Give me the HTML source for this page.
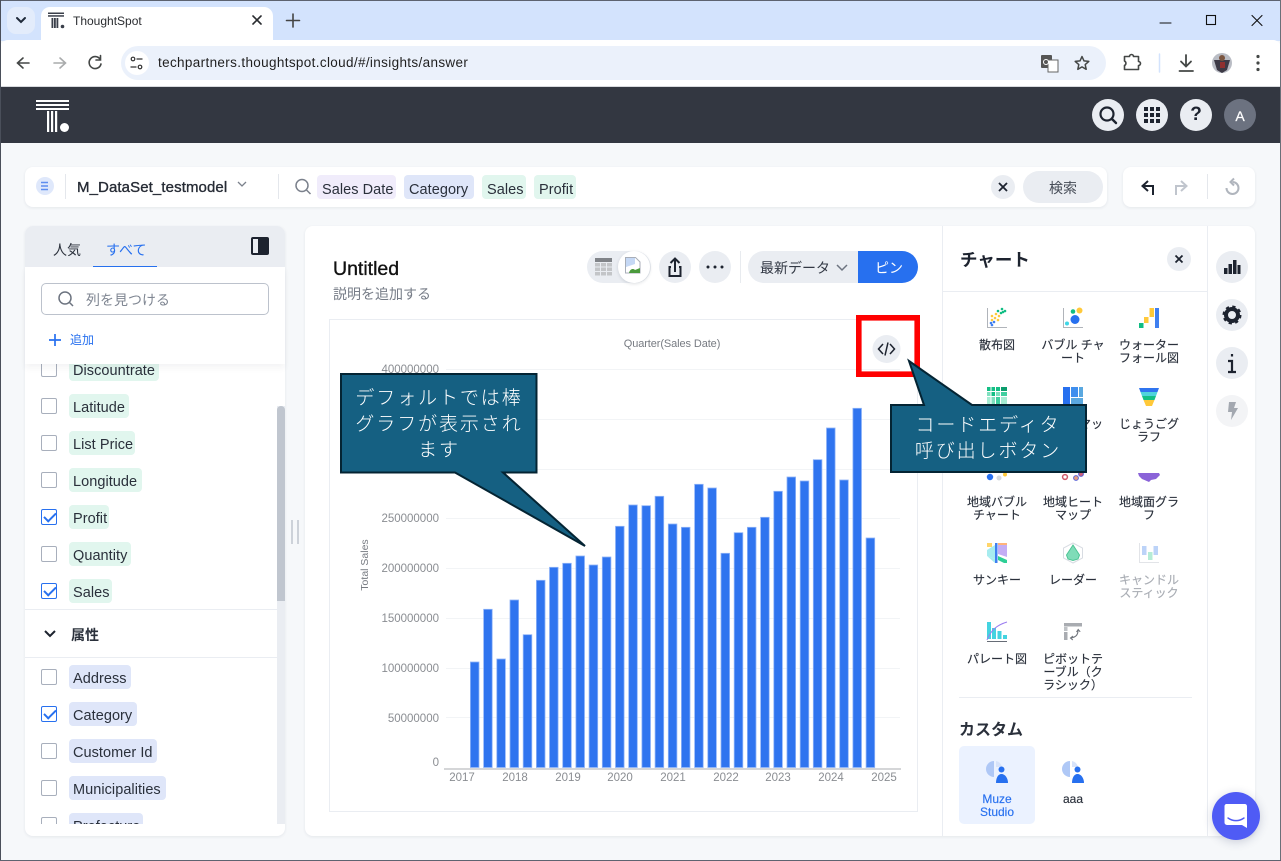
<!DOCTYPE html>
<html lang="ja"><head><meta charset="utf-8"><title>ThoughtSpot</title>
<style>
*{box-sizing:border-box}
html,body{margin:0;padding:0;width:1281px;height:861px;overflow:hidden;background:#f6f8fa;font-family:"Liberation Sans","Noto Sans CJK JP",sans-serif;color:#1d232f}
.a{position:absolute}
.t{position:absolute;white-space:nowrap}
.chip{position:absolute;height:24px;line-height:28px;border-radius:4px;font-size:14.5px;letter-spacing:.05px;padding-left:4px;color:#2a303b;white-space:nowrap;overflow:hidden}
.top{line-height:30px}
.g{background:#e1f6ee}.b{background:#dfe6f9}.p{background:#f0ecfb}
.cb{position:absolute;left:41px;width:16px;height:16px;border:1px solid #a8afbc;border-radius:2px;background:#fff}
.cb.on{border-color:#2770ef}
.cb.on:after{content:"";position:absolute;left:2px;top:1px;width:10px;height:5px;border-left:2px solid #2770ef;border-bottom:2px solid #2770ef;transform:rotate(-45deg) translate(-1px,1px)}
.lab{position:absolute;width:80px;text-align:center;font-size:12px;line-height:13px;color:#2a303b;-webkit-text-stroke:.15px currentColor}
.yl{position:absolute;left:350px;width:89px;text-align:right;font-size:11.5px;line-height:14px;color:#8a8d92}
.xl{position:absolute;width:40px;text-align:center;font-size:11.5px;line-height:14px;color:#8a8d92}
.circ{position:absolute;border-radius:50%;background:#eaedf2}
.call{position:absolute;z-index:6;color:#fff;font-size:19px;line-height:26px;text-align:center;font-weight:300;letter-spacing:1.9px;font-family:"Noto Sans CJK JP",sans-serif}
</style></head><body>

<!-- window chrome -->
<div class="a" style="left:0;top:0;width:1281px;height:41px;background:#d3e3fd;border-top:1px solid #5d6370"></div>
<div class="a" style="left:0;top:40px;width:1281px;height:47px;background:#fff;border-radius:8px 8px 0 0;border-bottom:1px solid #d8dade"></div>
<div class="a" style="left:41px;top:7px;width:232px;height:34px;background:#fff;border-radius:9px 9px 0 0"></div>
<div class="a" style="left:7px;top:7px;width:28px;height:27px;background:#e3ecfb;border-radius:9px"></div>
<div class="t" style="left:73px;top:13px;font-size:12px;line-height:16px;color:#2a2c30">ThoughtSpot</div>
<div class="a" style="left:121px;top:46px;width:985px;height:34px;background:#ebf1fb;border-radius:17px"></div>
<div class="a" style="left:125px;top:51px;width:24px;height:24px;background:#fff;border-radius:50%"></div>
<div class="t" style="left:158px;top:55px;font-size:13.5px;line-height:16px;color:#1f1f1f;letter-spacing:.35px">techpartners.thoughtspot.cloud/#/insights/answer</div>

<!-- app header -->
<div class="a" style="left:0;top:87px;width:1281px;height:56px;background:#333741"></div>
<div class="circ" style="left:1092px;top:99px;width:32px;height:32px"></div>
<div class="circ" style="left:1136px;top:99px;width:32px;height:32px"></div>
<div class="circ" style="left:1180px;top:99px;width:32px;height:32px"></div>
<div class="circ" style="left:1224px;top:99px;width:32px;height:32px;background:#6c7280"></div>
<div class="t" style="left:1180px;top:103px;width:32px;text-align:center;font-size:19px;font-weight:700;line-height:24px;color:#1d232f">?</div>
<div class="t" style="left:1224px;top:107px;width:32px;text-align:center;font-size:14px;line-height:18px;color:#fff;-webkit-text-stroke:.25px #fff">A</div>

<!-- search bar -->
<div class="a" style="left:25px;top:167px;width:1082px;height:40px;background:#fff;border-radius:8px;box-shadow:0 1px 3px rgba(30,40,60,.08)"></div>
<div class="a" style="left:1123px;top:167px;width:132px;height:40px;background:#fff;border-radius:8px;box-shadow:0 1px 3px rgba(30,40,60,.08)"></div>
<div class="a" style="left:65px;top:174px;width:1px;height:25px;background:#e4e7ec"></div>
<div class="a" style="left:278px;top:174px;width:1px;height:25px;background:#e4e7ec"></div>
<div class="t" style="left:77px;top:178px;font-size:15px;line-height:19px;color:#262b35;-webkit-text-stroke:.35px #262b35;letter-spacing:.1px">M_DataSet_testmodel</div>
<div class="chip p top" style="left:317px;top:175px;width:79px;padding-left:5px">Sales Date</div>
<div class="chip b top" style="left:404px;top:175px;width:70px;padding-left:5px">Category</div>
<div class="chip g top" style="left:482px;top:175px;width:44px;padding-left:5px">Sales</div>
<div class="chip g top" style="left:534px;top:175px;width:42px;padding-left:5px">Profit</div>
<div class="circ" style="left:991px;top:175px;width:24px;height:24px"></div>
<div class="a" style="left:1023px;top:171px;width:80px;height:32px;border-radius:16px;background:#eaedf2"></div>
<div class="t" style="left:1023px;top:179px;width:80px;text-align:center;font-size:14px;line-height:18px;color:#444a55">検索</div>
<div class="a" style="left:1207px;top:174px;width:1px;height:25px;background:#e4e7ec"></div>

<!-- left panel -->
<div class="a" style="left:25px;top:226px;width:260px;height:610px;background:#fff;border-radius:8px;box-shadow:0 1px 3px rgba(30,40,60,.08);overflow:hidden">
  <div class="a" style="left:0;top:0;width:260px;height:41px;background:#eaedf2"></div>
  <div class="a" style="left:68px;top:40px;width:64px;height:2px;background:#2770ef"></div>
  <div class="a" style="left:252px;top:180px;width:8px;height:418px;background:#eaedf2"></div>
  <div class="a" style="left:252px;top:180px;width:8px;height:195px;background:#c0c6cf;border-radius:4px 4px 0 0"></div>
</div>
<div class="t" style="left:53px;top:241px;font-size:14px;line-height:18px;color:#2a303b">人気</div>
<div class="t" style="left:106px;top:241px;font-size:14px;line-height:18px;color:#2770ef">すべて</div>

<div class="a" style="left:25px;top:364px;width:252px;height:460px;overflow:hidden">
  <div class="cb" style="left:16px;top:-3px"></div><div class="chip g" style="left:44px;top:-7px;width:90px">Discountrate</div>
  <div class="cb" style="left:16px;top:34px"></div><div class="chip g" style="left:44px;top:30px;width:60px">Latitude</div>
  <div class="cb" style="left:16px;top:71px"></div><div class="chip g" style="left:44px;top:67px;width:66px">List Price</div>
  <div class="cb" style="left:16px;top:108px"></div><div class="chip g" style="left:44px;top:104px;width:73px">Longitude</div>
  <div class="cb on" style="left:16px;top:145px"></div><div class="chip g" style="left:44px;top:141px;width:40px">Profit</div>
  <div class="cb" style="left:16px;top:182px"></div><div class="chip g" style="left:44px;top:178px;width:62px">Quantity</div>
  <div class="cb on" style="left:16px;top:219px"></div><div class="chip g" style="left:44px;top:215px;width:43px">Sales</div>
  <div class="a" style="left:0;top:245px;width:252px;height:1px;background:#eaedf2"></div>
  <div class="a" style="left:0;top:293px;width:252px;height:1px;background:#eaedf2"></div>
  <div class="t" style="left:46px;top:262px;font-size:14px;font-weight:700;line-height:18px;color:#2a303b">属性</div>
  <div class="cb" style="left:16px;top:305px"></div><div class="chip b" style="left:44px;top:301px;width:62px">Address</div>
  <div class="cb on" style="left:16px;top:342px"></div><div class="chip b" style="left:44px;top:338px;width:68px">Category</div>
  <div class="cb" style="left:16px;top:379px"></div><div class="chip b" style="left:44px;top:375px;width:88px">Customer Id</div>
  <div class="cb" style="left:16px;top:416px"></div><div class="chip b" style="left:44px;top:412px;width:97px">Municipalities</div>
  <div class="cb" style="left:16px;top:453px"></div><div class="chip b" style="left:44px;top:449px;width:74px">Prefecture</div>
</div>
<!-- panel search overlay -->
<div class="a" style="left:25px;top:267px;width:260px;height:97px;background:#fff;box-shadow:0 4px 6px rgba(30,40,60,.05)"></div>
<div class="a" style="left:41px;top:283px;width:228px;height:32px;border:1px solid #bcc2cc;border-radius:5px;background:#fff"></div>
<div class="t" style="left:86px;top:292px;font-size:14px;line-height:17px;color:#7f8692">列を見つける</div>
<div class="t" style="left:70px;top:332px;font-size:12px;line-height:17px;color:#2770ef">追加</div>

<!-- resize handle -->
<div class="a" style="left:291px;top:520px;width:2px;height:24px;background:#cdd2d9"></div>
<div class="a" style="left:297px;top:520px;width:2px;height:24px;background:#cdd2d9"></div>

<!-- main panel -->
<div class="a" style="left:305px;top:226px;width:950px;height:610px;background:#fff;border-radius:8px;box-shadow:0 1px 3px rgba(30,40,60,.08)"></div>
<div class="a" style="left:942px;top:226px;width:1px;height:610px;background:#eaedf2"></div>
<div class="a" style="left:1207px;top:226px;width:1px;height:610px;background:#eaedf2"></div>
<div class="a" style="left:943px;top:291px;width:264px;height:1px;background:#eaedf2"></div>
<div class="t" style="left:333px;top:258px;font-size:19.500px;line-height:22px;font-weight:400;color:#111;-webkit-text-stroke:.35px #111">Untitled</div>
<div class="t" style="left:333px;top:285px;font-size:14px;line-height:18px;color:#767c87">説明を追加する</div>

<!-- action row -->
<div class="a" style="left:587px;top:251px;width:64px;height:32px;border-radius:16px;background:#eaedf2"></div>
<div class="circ" style="left:618px;top:251px;width:32px;height:32px;background:#fff;box-shadow:0 1px 3px rgba(30,40,60,.15)"></div>
<div class="circ" style="left:659px;top:251px;width:32px;height:32px"></div>
<div class="circ" style="left:699px;top:251px;width:32px;height:32px"></div>
<div class="a" style="left:740px;top:251px;width:1px;height:32px;background:#e8ebef"></div>
<div class="a" style="left:748px;top:251px;width:112px;height:32px;border-radius:16px 0 0 16px;background:#eaedf2"></div>
<div class="a" style="left:858px;top:251px;width:60px;height:32px;border-radius:0 16px 16px 0;background:#2770ef"></div>
<div class="t" style="left:760px;top:259px;font-size:14px;line-height:18px;color:#333945">最新データ</div>
<div class="t" style="left:875px;top:259px;font-size:14px;line-height:18px;color:#fff">ピン</div>

<!-- chart frame -->
<div class="a" style="left:329px;top:319px;width:589px;height:493px;border:1px solid #eaedf2"></div>
<div class="t" style="left:572px;top:337px;width:200px;text-align:center;font-size:11px;line-height:14px;color:#777b82;letter-spacing:-.1px">Quarter(Sales Date)</div>
<div class="yl" style="top:363px">400000000</div>
<div class="yl" style="top:512px">250000000</div>
<div class="yl" style="top:562px">200000000</div>
<div class="yl" style="top:612px">150000000</div>
<div class="yl" style="top:662px">100000000</div>
<div class="yl" style="top:712px">50000000</div>
<div class="yl" style="top:756px">0</div>
<div class="xl" style="left:442px;top:771px">2017</div>
<div class="xl" style="left:495px;top:771px">2018</div>
<div class="xl" style="left:548px;top:771px">2019</div>
<div class="xl" style="left:600px;top:771px">2020</div>
<div class="xl" style="left:653px;top:771px">2021</div>
<div class="xl" style="left:706px;top:771px">2022</div>
<div class="xl" style="left:758px;top:771px">2023</div>
<div class="xl" style="left:811px;top:771px">2024</div>
<div class="xl" style="left:864px;top:771px">2025</div>
<div class="t" style="left:325px;top:558px;width:80px;text-align:center;font-size:10.5px;line-height:14px;color:#777b82;transform:rotate(-90deg)">Total Sales</div>

<svg class="a" style="left:0;top:0;z-index:2;pointer-events:none" width="1281" height="861" viewBox="0 0 1281 861">
  <!-- favicon -->
  <g fill="#3a3f4a"><rect x="48" y="12.500" width="16" height="1.500"/><rect x="48" y="15.200" width="16" height="1.500"/><rect x="51.500" y="18" width="1.800" height="10"/><rect x="54" y="18" width="1.800" height="10"/><rect x="56.500" y="18" width="1.800" height="10"/><circle cx="62.500" cy="26.500" r="1.800"/></g>
  <g fill="none" stroke-linecap="round">
    <path d="M17 18l4 4 4-4" stroke="#1f2a3a" stroke-width="2"/>
    <path d="M253 16l8 8M261 16l-8 8" stroke="#2a2c30" stroke-width="1.6"/>
    <path d="M293 14v13M286.500 20.500h13" stroke="#444" stroke-width="1.6"/>
    <path d="M1160 23h11" stroke="#111" stroke-width="1.1"/>
    <rect x="1206.500" y="15.500" width="9" height="9" stroke="#111" stroke-width="1.1"/>
    <path d="M1252 15.500l10 10M1262 15.500l-10 10" stroke="#111" stroke-width="1.1"/>
    <path d="M29 63H18M23 58l-5.500 5 5.500 5" stroke="#444746" stroke-width="1.600"/>
    <path d="M54 63h11M60 58l5.500 5-5.500 5" stroke="#a9abac" stroke-width="1.600"/>
    <path d="M100 59a6 6 0 1 0 1 5M100.500 55.500v4.500h-4.500" stroke="#444746" stroke-width="1.600"/>
    <circle cx="133" cy="59" r="1.800" stroke="#333" stroke-width="1.200"/><path d="M137 59h5M131 67h5" stroke="#333" stroke-width="1.300"/><circle cx="140" cy="67" r="1.800" stroke="#333" stroke-width="1.200"/>
    <path d="M1082 56.500l2 4.400 4.800.5-3.600 3.200 1 4.700-4.200-2.400-4.200 2.400 1-4.700-3.600-3.200 4.800-.5z" stroke="#444746" stroke-width="1.500" stroke-linejoin="round"/>
    <path d="M1125 57h5a2 2 0 0 1 4 0h5v5a2 2 0 0 1 0 4v4h-14v-4a2.500 2.500 0 0 0 0-4.500z" stroke="#444746" stroke-width="1.600" stroke-linejoin="round" transform="translate(-.5,-.5)"/>
    <path d="M1159.500 54v18" stroke="#d3e3fd" stroke-width="1.500"/>
    <path d="M1186 55v11M1181 61.500l5 5 5-5M1179.500 71h13.500" stroke="#444746" stroke-width="1.800"/>
  </g>
  <rect x="1041" y="55" width="11" height="13" rx="1" fill="#555"/><rect x="1048" y="60" width="10" height="12" fill="#fff" stroke="#666"/><circle cx="1046" cy="62" r="2.500" fill="none" stroke="#fff"/>
  <circle cx="1222" cy="63" r="10" fill="#b9bcc4"/><path d="M1214 60h16l-3 10-5 3-5-3z" fill="#3d3a46"/><circle cx="1222" cy="58" r="3" fill="#7a5540"/><rect x="1220" y="62" width="5" height="6" fill="#8f3030"/>
  <circle cx="1258" cy="56.500" r="1.600" fill="#444746"/><circle cx="1258" cy="63" r="1.600" fill="#444746"/><circle cx="1258" cy="69.500" r="1.600" fill="#444746"/>

  <!-- logo -->
  <g fill="#fff"><rect x="36" y="100" width="33" height="2"/><rect x="36" y="104" width="33" height="2"/><rect x="36" y="108" width="33" height="2"/><rect x="47" y="111" width="2.200" height="21"/><rect x="51" y="111" width="2.200" height="21"/><rect x="55" y="111" width="2.200" height="21"/><circle cx="64.500" cy="127.500" r="4.500"/></g>
  <!-- header icons -->
  <circle cx="1107" cy="114" r="6.500" fill="none" stroke="#1d232f" stroke-width="2.200"/><path d="M1112 119l4 4" stroke="#1d232f" stroke-width="2.400" stroke-linecap="round"/>
  <g fill="#1d232f"><rect x="1144" y="107" width="4" height="4"/><rect x="1150" y="107" width="4" height="4"/><rect x="1156" y="107" width="4" height="4"/><rect x="1144" y="113" width="4" height="4"/><rect x="1150" y="113" width="4" height="4"/><rect x="1156" y="113" width="4" height="4"/><rect x="1144" y="119" width="4" height="4"/><rect x="1150" y="119" width="4" height="4"/><rect x="1156" y="119" width="4" height="4"/></g>

  <!-- search bar icons -->
  <circle cx="45" cy="186" r="9" fill="#dfe8fb"/><path d="M41 182.500h7M41 186h7M41 189.500h7" stroke="#5e8def" stroke-width="1.500"/>
  <path d="M238 181l4 4 4-4" fill="none" stroke="#7b818c" stroke-width="1.300" transform="translate(0,1)"/>
  <circle cx="302" cy="185.500" r="6" fill="none" stroke="#7b818c" stroke-width="1.500"/><path d="M306.500 190l4 4" stroke="#7b818c" stroke-width="1.500"/>
  <path d="M999 183l8 8M1007 183l-8 8" stroke="#1d232f" stroke-width="1.800"/>
  <g fill="none" stroke-width="2"><path d="M1153 195v-9h-9M1148 181l-5.500 5 5.500 5" stroke="#1d232f"/><path d="M1176 195v-9h9M1181 181l5.500 5-5.500 5" stroke="#c0c5cd"/><path d="M1232.500 182A6 6 0 1 1 1226.500 188M1234 178.500l-3.500 3.500 3.500 3.500" stroke="#b0b5bd"/></g>

  <!-- panel icons -->
  <rect x="251" y="237" width="18" height="18" rx="2" fill="#1d232f"/><rect x="253" y="239" width="5" height="14" fill="#eaedf2"/>
  <circle cx="65" cy="298" r="6" fill="none" stroke="#6d7480" stroke-width="1.500"/><path d="M69.500 302.500l3.500 3.500" stroke="#6d7480" stroke-width="1.500"/>
  <path d="M55 334v12M49 340h12" stroke="#2770ef" stroke-width="1.700"/>
  <path d="M45 631l5 5 5-5" fill="none" stroke="#1d232f" stroke-width="2"/>

  <!-- toolbar icons -->
  <rect x="595" y="258" width="17" height="4" fill="#808388"/><g fill="#c3c5c8"><rect x="595" y="263" width="5" height="3.500"/><rect x="601" y="263" width="5" height="3.500"/><rect x="607" y="263" width="5" height="3.500"/><rect x="595" y="267.500" width="5" height="3.500"/><rect x="601" y="267.500" width="5" height="3.500"/><rect x="607" y="267.500" width="5" height="3.500"/><rect x="595" y="272" width="5" height="3.500"/><rect x="601" y="272" width="5" height="3.500"/><rect x="607" y="272" width="5" height="3.500"/></g>
  <path d="M625.500 257.500h10l4.500 4.500v11h-14.500z" fill="#fff" stroke="#a8aeb8"/><path d="M626 258h9v6l-9 3z" fill="#c5d8f5"/><path d="M629 273c1-4 4-5 6-3l5-2v5z" fill="#4b9a3c"/>
  <path d="M675 259v13M670.500 263l4.500-4.500 4.500 4.500M671 267h-1.500v9h11v-9H679" fill="none" stroke="#1d232f" stroke-width="2"/>
  <circle cx="708" cy="267" r="1.500" fill="#1d232f"/><circle cx="715" cy="267" r="1.500" fill="#1d232f"/><circle cx="722" cy="267" r="1.500" fill="#1d232f"/>
  <path d="M837 265l5 5 5-5" fill="none" stroke="#6d7480" stroke-width="1.500"/>

  <!-- grid -->
  <g stroke="#f2f4f6"><path d="M446 369.500h454M446 419.500h454M446 469.500h454M446 518.500h454M446 568.500h454M446 618.500h454M446 668.500h454M446 717.500h454"/></g>
  <rect x="444" y="768" width="457" height="2" fill="#d5d6d8"/>
  <!-- bars -->
  <g fill="#2f74ef" stroke="#8fb4f8" stroke-width=".8">
    <rect x="470.400" y="662" width="8.600" height="105.500"/><rect x="483.600" y="609.300" width="8.600" height="158.200"/><rect x="496.800" y="659" width="8.600" height="108.500"/><rect x="510" y="600" width="8.600" height="167.500"/><rect x="523.200" y="634.700" width="8.600" height="132.800"/><rect x="536.400" y="580.300" width="8.600" height="187.200"/><rect x="549.500" y="567.300" width="8.600" height="200.200"/><rect x="562.700" y="563.300" width="8.600" height="204.200"/><rect x="575.900" y="556" width="8.600" height="211.500"/><rect x="589.100" y="565" width="8.600" height="202.500"/><rect x="602.300" y="557" width="8.600" height="210.500"/><rect x="615.500" y="526.300" width="8.600" height="241.200"/><rect x="628.700" y="505" width="8.600" height="262.500"/><rect x="641.900" y="505.700" width="8.600" height="261.800"/><rect x="655.100" y="496.300" width="8.600" height="271.200"/><rect x="668.300" y="524" width="8.600" height="243.500"/><rect x="681.400" y="527.300" width="8.600" height="240.200"/><rect x="694.600" y="484.300" width="8.600" height="283.200"/><rect x="707.800" y="488" width="8.600" height="279.500"/><rect x="721" y="553.300" width="8.600" height="214.200"/><rect x="734.200" y="532.700" width="8.600" height="234.800"/><rect x="747.400" y="527.300" width="8.600" height="240.200"/><rect x="760.600" y="517.300" width="8.600" height="250.200"/><rect x="773.800" y="491.300" width="8.600" height="276.200"/><rect x="787" y="477" width="8.600" height="290.500"/><rect x="800.200" y="481" width="8.600" height="286.500"/><rect x="813.300" y="459.700" width="8.600" height="307.800"/><rect x="826.500" y="428" width="8.600" height="339.500"/><rect x="839.700" y="480" width="8.600" height="287.500"/><rect x="852.900" y="408.300" width="8.600" height="359.200"/><rect x="866.100" y="538" width="8.600" height="229.500"/>
  </g>
  <!-- code button + red box -->
  <circle cx="886.500" cy="349" r="14" fill="#eaedf2"/>
  <path d="M883 344l-4.500 5 4.500 5M890 344l4.500 5-4.500 5M888 342.500l-3 13" fill="none" stroke="#1d232f" stroke-width="1.500"/>
  <rect x="858.800" y="317.800" width="58.400" height="56.400" fill="none" stroke="#ff0000" stroke-width="5.600"/>

  <!-- side rail + chart close -->
  <circle cx="1179" cy="259" r="12" fill="#eaedf2"/><path d="M1175.500 255.500l7 7M1182.500 255.500l-7 7" stroke="#1d232f" stroke-width="1.800"/>
  <circle cx="1232" cy="267" r="16" fill="#eaedf2"/><circle cx="1232" cy="315" r="16" fill="#eaedf2"/><circle cx="1232" cy="363" r="16" fill="#eaedf2"/><circle cx="1232" cy="411" r="16" fill="#f3f4f6"/>
  <g fill="#1d232f"><rect x="1224" y="268" width="3.500" height="6"/><rect x="1228.500" y="264" width="3.500" height="10"/><rect x="1233" y="260" width="3.500" height="14"/><rect x="1237.500" y="265" width="3" height="9"/></g>
  <circle cx="1232" cy="315" r="6" fill="none" stroke="#1d232f" stroke-width="4"/><circle cx="1232" cy="315" r="8.200" fill="none" stroke="#1d232f" stroke-width="2.600" stroke-dasharray="3.200 3.240"/>
  <path d="M1232 354v2.500M1228 361h4v10M1228 372h8" fill="none" stroke="#1d232f" stroke-width="2.200"/>
  <path d="M1229 402h7l-2 6h4l-7 12 1-8h-4z" fill="#a3a8b0"/>

  <!-- chart type icons: scatter -->
  <path d="M987.500 308v19.500H1007" fill="none" stroke="#b0b4ba"/>
  <g fill="#ffc93a"><circle cx="992" cy="316" r="1.300"/><circle cx="995" cy="318" r="1.300"/><circle cx="999" cy="316" r="1.300"/><circle cx="992" cy="320" r="1.300"/><circle cx="996" cy="314" r="1.300"/><circle cx="998" cy="320" r="1.300"/></g>
  <g fill="#10bd83"><circle cx="998" cy="311" r="1.300"/><circle cx="1002" cy="309" r="1.300"/><circle cx="1005" cy="311" r="1.300"/><circle cx="1001" cy="313" r="1.300"/><circle cx="1003" cy="312" r="1.300"/></g>
  <g fill="#3f7ff0"><circle cx="991" cy="323" r="1.300"/><circle cx="994" cy="322" r="1.300"/><circle cx="992" cy="325" r="1.300"/></g>
  <!-- bubble -->
  <path d="M1063.500 308v19.500H1083" fill="none" stroke="#b0b4ba"/><circle cx="1075" cy="319.500" r="4.500" fill="#2770ef"/><circle cx="1073" cy="311.500" r="2.300" fill="#10bd83"/><circle cx="1079.500" cy="310.500" r="3" fill="#ffc93a"/><circle cx="1067" cy="323.500" r="2" fill="#3fd6e6"/>
  <!-- waterfall -->
  <rect x="1139" y="323" width="4.500" height="5" fill="#10bd83"/><rect x="1144" y="317" width="4.500" height="6" fill="#ffc93a"/><rect x="1149.500" y="308" width="4.500" height="9" fill="#ffc93a"/><rect x="1155" y="308" width="4" height="20" fill="#3f7ff0"/>
  <!-- heatmap -->
  <g fill="#14bf85"><rect x="987" y="387" width="3.500" height="4"/><rect x="991.500" y="387" width="3.500" height="4"/><rect x="1001" y="387" width="6" height="4" fill="#0b9d6d"/><rect x="996" y="387" width="4" height="4"/><rect x="987" y="392" width="3.500" height="4" fill="#7fe0bf"/><rect x="991.500" y="392" width="3.500" height="4"/><rect x="996" y="392" width="4" height="4" fill="#7fe0bf"/><rect x="1001" y="392" width="6" height="4" fill="#3fcf9f"/><rect x="987" y="397" width="3.500" height="7" fill="#a5ecd3"/><rect x="991.500" y="397" width="3.500" height="7" fill="#7fe0bf"/><rect x="996" y="397" width="4" height="7" fill="#3fcf9f"/><rect x="1001" y="397" width="6" height="7" fill="#a5ecd3"/></g>
  <!-- treemap -->
  <rect x="1063" y="387" width="7" height="18" fill="#2770ef"/><rect x="1071" y="387" width="7" height="10" fill="#3f8fee"/><rect x="1079" y="387" width="4" height="10" fill="#5aa8e0"/><rect x="1071" y="398" width="12" height="7" fill="#5aa8e0"/>
  <!-- funnel -->
  <path d="M1139 388h20l-1.500 4h-17z" fill="#2f74ef"/><path d="M1140.500 392h17l-1.500 4h-14z" fill="#4fd3dc"/><path d="M1142 396h14l-1.500 4h-11z" fill="#14bf85"/><path d="M1143.500 400h11l-2.500 6h-6z" fill="#ffc93a"/>
  <!-- geo fragments -->
  <circle cx="990" cy="477" r="3.200" fill="#2770ef"/><circle cx="999" cy="478" r="2.500" fill="#d5d9de"/><circle cx="1005" cy="474.500" r="2" fill="#ffc93a"/>
  <circle cx="1065" cy="477" r="2.400" fill="none" stroke="#d05a6a" stroke-width="1.500"/><circle cx="1076" cy="478" r="2.400" fill="#e8a080" stroke="#5a62d6"/><circle cx="1081" cy="474" r="2.400" fill="#d0607a" stroke="#5a62d6"/>
  <path d="M1138 473h21l1 2-4 4-5 1-2 2-7-3-3-3z" fill="#8a63d8"/>
  <!-- sankey -->
  <path d="M987 543h5v4h-5z" fill="#ffd56a"/><path d="M987 550l8-5v14l-8-3z" fill="#a7ecef"/><path d="M995 543h2.500v20H995z" fill="#3f7ff0"/><path d="M998 545l9 0v12l-9-3z" fill="#c4aef5"/><path d="M998 543h9v2h-9z" fill="#ffb37a"/><path d="M998 556l9 4v3h-3l-6-3z" fill="#2ecf96"/><path d="M987 556l8 3v4z" fill="#a7ecef"/>
  <!-- radar -->
  <path d="M1073 543l9.500 5v10l-9.500 5-9.500-5v-10z" fill="#fff" stroke="#d8dce2"/><path d="M1073 545l6.500 10-1.500 4-5 1.500-5-1.500-1.500-4z" fill="#7fdcb8" stroke="#4cc494"/>
  <!-- candlestick -->
  <path d="M1139.500 543v19.500H1159" fill="none" stroke="#e2e4e8"/><rect x="1142" y="546" width="4.500" height="9" fill="#bcd3f8"/><rect x="1148" y="552" width="4.500" height="8" fill="#b5ecd6"/><rect x="1153.500" y="546" width="4.500" height="9" fill="#bcd3f8"/>
  <!-- pareto -->
  <rect x="987" y="622" width="4" height="17" fill="#44d3e0"/><rect x="992" y="628" width="4" height="11" fill="#44d3e0"/><rect x="997.500" y="631" width="4" height="8" fill="#44d3e0"/><rect x="1003" y="635" width="4" height="4" fill="#44d3e0"/><path d="M987 640c4-10 10-15 20-18" fill="none" stroke="#9a7cf0"/><path d="M987 641.500h20" stroke="#666c76"/>
  <!-- pivot -->
  <rect x="1064" y="623" width="18" height="3.500" fill="#a9acb1"/><rect x="1064" y="627" width="3.500" height="4" fill="#bfc2c6"/><rect x="1064" y="632" width="3.500" height="8" fill="#a9acb1"/><path d="M1078 630c0 5-2 7-7 8M1076.500 632l1.700-2.500 2 2.300M1073 636l-2.500 2 2.300 2" fill="none" stroke="#70757d" stroke-width="1.100"/>
  <!-- card -->
  <rect x="959" y="746" width="76" height="78" rx="5" fill="#ebf2ff"/>
  <path d="M995 761a8 8 0 1 0 0 16z" fill="#afc8f6" transform="translate(-1,0)"/><path d="M996 761a8 8 0 0 1 6 6h-6z" fill="#d7e3fa"/><circle cx="1001.500" cy="769.500" r="3" fill="#2770ef"/><path d="M996 783c0-5 2-9 5.500-9s6.500 4 6.500 9z" fill="#2770ef"/>
  <path d="M1071 761a8 8 0 1 0 0 16z" fill="#afc8f6" transform="translate(-1,0)"/><path d="M1072 761a8 8 0 0 1 6 6h-6z" fill="#d7e3fa"/><circle cx="1077.500" cy="769.500" r="3" fill="#2770ef"/><path d="M1072 783c0-5 2-9 5.500-9s6.500 4 6.500 9z" fill="#2770ef"/>
  <path d="M959 697.500h233" stroke="#eaedf2"/>
</svg>

<!-- chart panel text -->
<div class="t" style="left:960px;top:249px;font-size:17.500px;line-height:22px;font-weight:700;color:#1d232f;z-index:3">チャート</div>
<div class="lab" style="left:957px;top:339px;z-index:3">散布図</div>
<div class="lab" style="left:1033px;top:339px;z-index:3">バブル チャ<br>ート</div>
<div class="lab" style="left:1109px;top:339px;z-index:3">ウォーター<br>フォール図</div>
<div class="lab" style="left:1033px;top:418px;z-index:3">ツリーマッ<br>プ</div>
<div class="lab" style="left:1109px;top:418px;z-index:3">じょうごグ<br>ラフ</div>
<div class="lab" style="left:957px;top:496px;z-index:3">地域バブル<br>チャート</div>
<div class="lab" style="left:1033px;top:496px;z-index:3">地域ヒート<br>マップ</div>
<div class="lab" style="left:1109px;top:496px;z-index:3">地域面グラ<br>フ</div>
<div class="lab" style="left:957px;top:574px;z-index:3">サンキー</div>
<div class="lab" style="left:1033px;top:574px;z-index:3">レーダー</div>
<div class="lab" style="left:1109px;top:574px;z-index:3;color:#a9adb4">キャンドル<br>スティック</div>
<div class="lab" style="left:957px;top:653px;z-index:3">パレート図</div>
<div class="lab" style="left:1033px;top:653px;z-index:3">ピボットテ<br>ーブル（ク<br>ラシック）</div>
<div class="t" style="left:959px;top:721px;font-size:16px;line-height:20px;font-weight:700;color:#2a303b;z-index:3">カスタム</div>
<div class="lab" style="left:957px;top:793px;z-index:3;color:#2770ef">Muze<br>Studio</div>
<div class="lab" style="left:1033px;top:793px;z-index:3">aaa</div>

<!-- callouts -->
<svg class="a" style="left:0;top:0;z-index:5;pointer-events:none" width="1281" height="861" viewBox="0 0 1281 861">
  <path d="M341 374H536.500V472.500H503L585 546 455 472.500H341Z" fill="#156082" stroke="#042433" stroke-width="2" stroke-linejoin="miter"/>
  <path d="M891 405H924L909 361 972 405H1086V472H891Z" fill="#156082" stroke="#042433" stroke-width="2" stroke-linejoin="miter"/>
</svg>
<div class="call" style="left:345px;top:384px;width:188px">デフォルトでは棒<br>グラフが表示され<br>ます</div>
<div class="call" style="left:893px;top:411px;width:190px">コードエディタ<br>呼び出しボタン</div>

<!-- intercom launcher -->
<div class="a" style="left:1212px;top:792px;width:48px;height:48px;border-radius:50%;background:#4f5bf5;box-shadow:0 2px 10px rgba(30,40,90,.2);z-index:7"></div>
<svg class="a" style="left:1224px;top:804px;z-index:8" width="24" height="24" viewBox="0 0 24 24"><path d="M4 0h17a2.500 2.500 0 0 1 2 2.500V24l-5-3H3a2.500 2.500 0 0 1-2.500-2.500v-16A2.500 2.500 0 0 1 4 0z" fill="#fff"/><path d="M4 14c5 3.500 11 3.500 16 0" fill="none" stroke="#4f5bf5" stroke-width="1.400" stroke-linecap="round"/></svg>

<!-- window edges -->
<div class="a" style="left:0;top:0;width:1px;height:861px;background:#4a4f5a;z-index:9"></div>
<div class="a" style="left:1280px;top:0;width:1px;height:861px;background:#6a6f78;z-index:9"></div>
<div class="a" style="left:0;top:860px;width:1281px;height:1px;background:#5d6370;z-index:9"></div>
</body></html>
